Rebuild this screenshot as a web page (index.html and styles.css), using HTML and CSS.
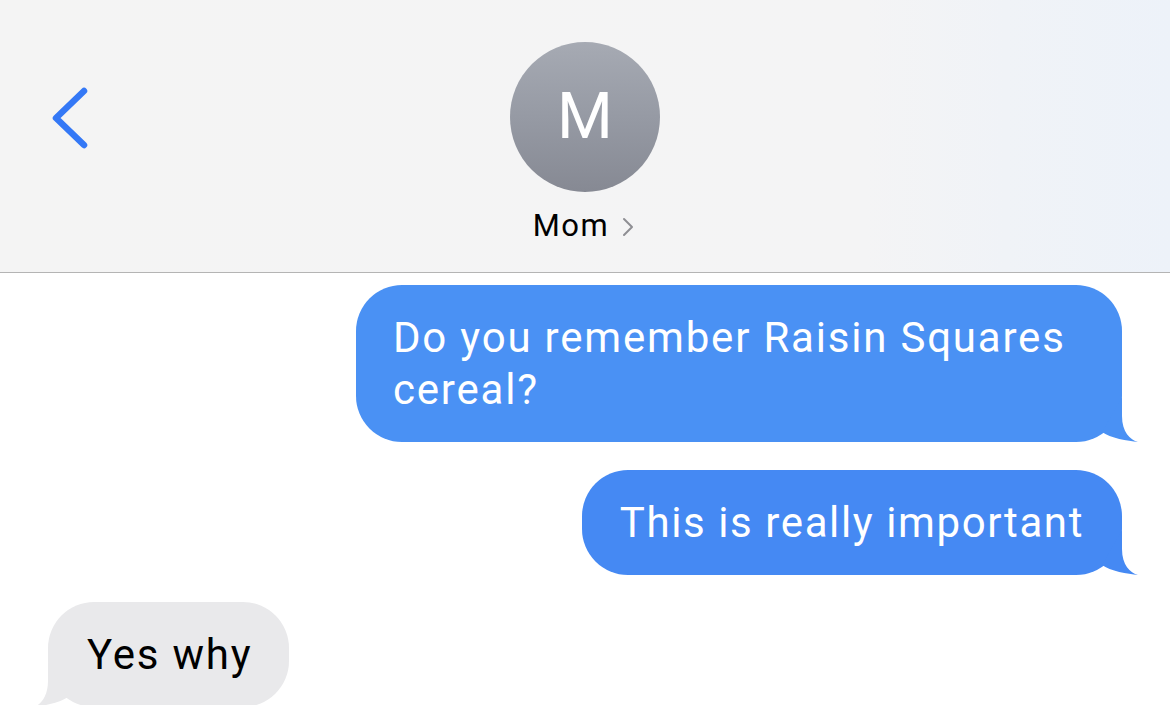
FILE: index.html
```html
<!DOCTYPE html>
<html lang="en">
<head>
<meta charset="utf-8">
<title>Messages – Mom</title>
<link rel="stylesheet" href="styles.css">
</head>
<body>
<div class="screen">
  <header class="nav">
    <div class="nav-left">
      <svg class="back" width="40" height="64" viewBox="0 0 40 64" aria-label="Back">
        <path d="M34 5 L6 32 L34 59" fill="none" stroke="#3478f6" stroke-width="6.5" stroke-linecap="round" stroke-linejoin="round"/>
      </svg>
    </div>
    <div class="contact">
      <div class="avatar"><span>M</span></div>
      <div class="name-row">
        <span class="name">Mom</span>
        <svg class="name-chev" width="12" height="20" viewBox="0 0 12 20">
          <path d="M2 2 L10 10 L2 18" fill="none" stroke="#8e8e93" stroke-width="2" stroke-linecap="round" stroke-linejoin="round"/>
        </svg>
      </div>
    </div>
    <div class="nav-right"></div>
  </header>

  <main class="thread">
    <div class="row sent">
      <div class="bubble out b1">
        Do you remember Raisin Squares cereal?
        <svg class="tail tail-out" width="60" height="50" viewBox="-42 -48 60 50"><path d="M0 -45 L0 -26 C0 -10 8 -2 16 0 C6 -1 -12 -4 -20 -10 Z"/></svg>
      </div>
    </div>
    <div class="row sent">
      <div class="bubble out b2">
        This is really important
        <svg class="tail tail-out" width="60" height="50" viewBox="-42 -48 60 50"><path d="M0 -45 L0 -26 C0 -10 8 -2 16 0 C6 -1 -12 -4 -20 -10 Z"/></svg>
      </div>
    </div>
    <div class="row received">
      <div class="bubble in">
        Yes why
        <svg class="tail tail-in" width="60" height="50" viewBox="-18 -48 60 50"><path d="M0 -45 L0 -26 C0 -10 -8 -2 -14 0 C-6 -1 12 -4 20 -10 Z"/></svg>
      </div>
    </div>
  </main>
</div>
</body>
</html>
```

FILE: styles.css
```css
* { box-sizing: border-box; }

html, body {
  margin: 0;
  padding: 0;
  background: #ffffff;
}

body {
  font-family: Roboto, "Liberation Sans", Arial, sans-serif;
  width: 1170px;
  height: 705px;
  overflow: hidden;
}

.screen {
  width: 1170px;
  height: 705px;
  overflow: hidden;
}

.nav {
  height: 273px;
  display: grid;
  grid-template-columns: 1fr auto 1fr;
  align-items: start;
  background: linear-gradient(90deg, #f4f4f4 0%, #f4f4f5 74%, #f0f3f7 86%, #edf2f9 100%);
  border-bottom: 1px solid #b4b4b4;
}

.nav-left {
  padding-top: 86px;
  padding-left: 50px;
}

.back { display: block; }

.contact {
  display: flex;
  flex-direction: column;
  align-items: center;
  padding-top: 42px;
}

.avatar {
  width: 150px;
  height: 150px;
  border-radius: 50%;
  background: linear-gradient(180deg, #a6aab3 0%, #969aa4 50%, #868993 100%);
  display: flex;
  align-items: center;
  justify-content: center;
  color: #ffffff;
  font-size: 64px;
  font-weight: 400;
  line-height: 1;
}

.name-row {
  display: flex;
  align-items: center;
  margin-top: 16px;
  margin-left: -3px;
}

.name {
  font-size: 31px;
  line-height: 36px;
  letter-spacing: 1.6px;
  color: #000000;
}

.name-chev {
  display: block;
  margin-left: 13px;
  margin-top: 2px;
}

.thread {
  display: flex;
  flex-direction: column;
  gap: 28px;
  padding: 12px 48px 0 48px;
}

.row { display: flex; }
.row.sent { justify-content: flex-end; }
.row.received { justify-content: flex-start; margin-top: -1px; }

.bubble {
  position: relative;
  max-width: 766px;
  padding: 27px 38px 26px 37px;
  border-radius: 46px;
  font-size: 42px;
  line-height: 52px;
  font-weight: 400;
  letter-spacing: 1.8px;
}

.bubble.out {
  color: #ffffff;
}

.bubble.b1 { background: #4a91f4; }
.bubble.b2 { background: #4589f3; padding-left: 38px; letter-spacing: 1.6px; }
.bubble.b1 .tail path { fill: #4a91f4; }
.bubble.b2 .tail path { fill: #4589f3; }

.bubble.in {
  background: #e9e9eb;
  color: #000000;
  padding-left: 39px;
  padding-right: 37px;
}
.bubble.in .tail path { fill: #e9e9eb; }

.tail {
  position: absolute;
  bottom: -2px;
  display: block;
  overflow: visible;
}

.tail-out { right: -18px; }
.tail-in { left: -18px; }
```
